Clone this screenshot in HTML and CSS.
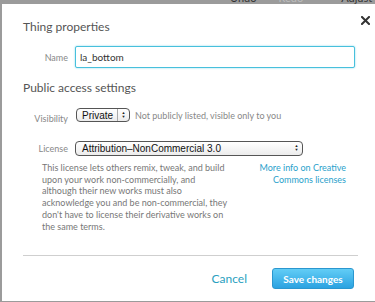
FILE: index.html
```html
<!DOCTYPE html>
<html lang="en">
<head>
    <meta charset="UTF-8" />
    <meta name="viewport" content="width=device-width, initial-scale=1" />
    <title>Thing properties</title>
    <link rel="stylesheet" href="styles.css">
</head>
<body>
    <div class="toolbar">
        <span class="tool tool-undo">Undo</span>
        <span class="tool tool-redo">Redo</span>
        <span class="tool tool-adjust">Adjust</span>
    </div>

    <div class="dialog">
        <button class="close" aria-label="Close">
            <svg width="9" height="9" viewBox="0 0 9 9">
                <path d="M1 1 L8 8 M8 1 L1 8" stroke="#333" stroke-width="2" stroke-linecap="square" fill="none"/>
            </svg>
        </button>

        <h2 class="section-title">Thing properties</h2>
        <div class="row row-name">
            <label class="label">Name</label>
            <input class="text-input" type="text" value="la_bottom">
        </div>

        <h2 class="section-title section-public">Public access settings</h2>
        <div class="row row-visibility">
            <label class="label label-low">Visibility</label>
            <div class="select select-small">
                <span class="select-value">Private</span>
                <span class="select-arrows">&#9650;<br>&#9660;</span>
            </div>
            <span class="hint">Not publicly listed, visible only to you</span>
        </div>
        <div class="row row-license">
            <label class="label">License</label>
            <div class="select select-wide">
                <span class="select-value">Attribution–NonCommercial 3.0</span>
                <span class="select-arrows">&#9650;<br>&#9660;</span>
            </div>
        </div>

        <div class="license-info">
            <p class="license-text">This license lets others remix, tweak, and build<br>
                upon your work non-commercially, and<br>
                although their new works must also<br>
                acknowledge you and be non-commercial, they<br>
                don't have to license their derivative works on<br>
                the same terms.</p>
            <a class="license-link" href="#">More info on Creative Commons licenses</a>
        </div>

        <div class="footer">
            <a class="cancel" href="#">Cancel</a>
            <button class="save">Save changes</button>
        </div>
    </div>
</body>
</html>
```

FILE: styles.css
```css
* {
    box-sizing: border-box;
}
body {
    margin: 0;
    background-color: #9b9b9b;
    font-family: Lato, "Open Sans", sans-serif;
    height: 302px;
    overflow: hidden;
}
.toolbar {
    height: 4px;
    overflow: hidden;
    display: flex;
    font-size: 11px;
    line-height: 11px;
    padding-left: 230px;
}
.tool {
    margin-top: -8px;
    color: #333;
}
.tool-redo {
    color: #bdbdbd;
    margin-left: 22px;
}
.tool-adjust {
    margin-left: 38px;
}
.dialog {
    position: relative;
    margin-left: 2px;
    height: 297px;
    background-color: #fff;
    padding: 15px 17px 0 21px;
}
.close {
    position: absolute;
    top: 9px;
    right: 5px;
    border: none;
    background: none;
    padding: 0;
    cursor: pointer;
}
.section-title {
    margin: 0;
    font-size: 12px;
    line-height: 16px;
    font-weight: normal;
    color: #555;
}
.section-public {
    margin-top: 12px;
}
.row {
    display: flex;
    align-items: center;
}
.row-name {
    margin-top: 11px;
}
.row-visibility {
    margin-top: 12px;
}
.row-license {
    margin-top: 19px;
}
.label {
    width: 45px;
    margin-right: 7px;
    text-align: right;
    font-size: 9px;
    color: #888;
}
.label-low {
    position: relative;
    top: 3px;
}
.text-input {
    width: 280px;
    height: 22px;
    border: 1px solid #48c0dc;
    border-radius: 2px;
    box-shadow: 0 0 2px #7fd6ea;
    padding: 0 4px;
    font-family: Lato, sans-serif;
    font-size: 10px;
    color: #333;
    outline: none;
}
.select {
    display: flex;
    align-items: stretch;
    border: 1px solid #555;
    border-radius: 4px;
    background: linear-gradient(#fff, #ececec);
    font-family: "Liberation Sans", Arial, sans-serif;
    color: #111;
}
.select-small {
    width: 54px;
    height: 14px;
    margin-left: 1px;
}
.select-wide {
    width: 228px;
    height: 15px;
}
.select-value {
    flex: 1;
    font-size: 10px;
    line-height: 13px;
    padding-left: 6px;
}
.select-small .select-value {
    border-right: 1px solid #aaa;
    padding-left: 5px;
}
.select-arrows {
    width: 11px;
    font-size: 4px;
    line-height: 4px;
    text-align: center;
    padding-top: 2px;
    color: #222;
}
.hint {
    margin-left: 5px;
    font-size: 9px;
    color: #888;
}
.license-info {
    display: flex;
    justify-content: space-between;
    padding-left: 19px;
    padding-right: 12px;
    margin-top: 6px;
}
.license-text {
    margin: 0;
    width: 205px;
    font-size: 9px;
    line-height: 11.7px;
    color: #777;
}
.license-link {
    width: 92px;
    text-align: right;
    font-size: 9px;
    line-height: 11.7px;
    color: #2a9fcb;
    text-decoration: none;
}
.footer {
    display: flex;
    justify-content: flex-end;
    align-items: center;
    margin-top: 23px;
    border-top: 1px solid #cfcfcf;
    padding-top: 12px;
    padding-right: 4px;
}
.cancel {
    font-size: 12px;
    color: #2a9fc0;
    text-decoration: none;
    margin-right: 25px;
}
.save {
    width: 82px;
    height: 21px;
    border: 1px solid #2b97cf;
    border-radius: 3px;
    background: linear-gradient(#62cdf6, #2ba2e1);
    color: #fff;
    font-family: Lato, sans-serif;
    font-weight: bold;
    font-size: 10px;
    cursor: pointer;
}
```
